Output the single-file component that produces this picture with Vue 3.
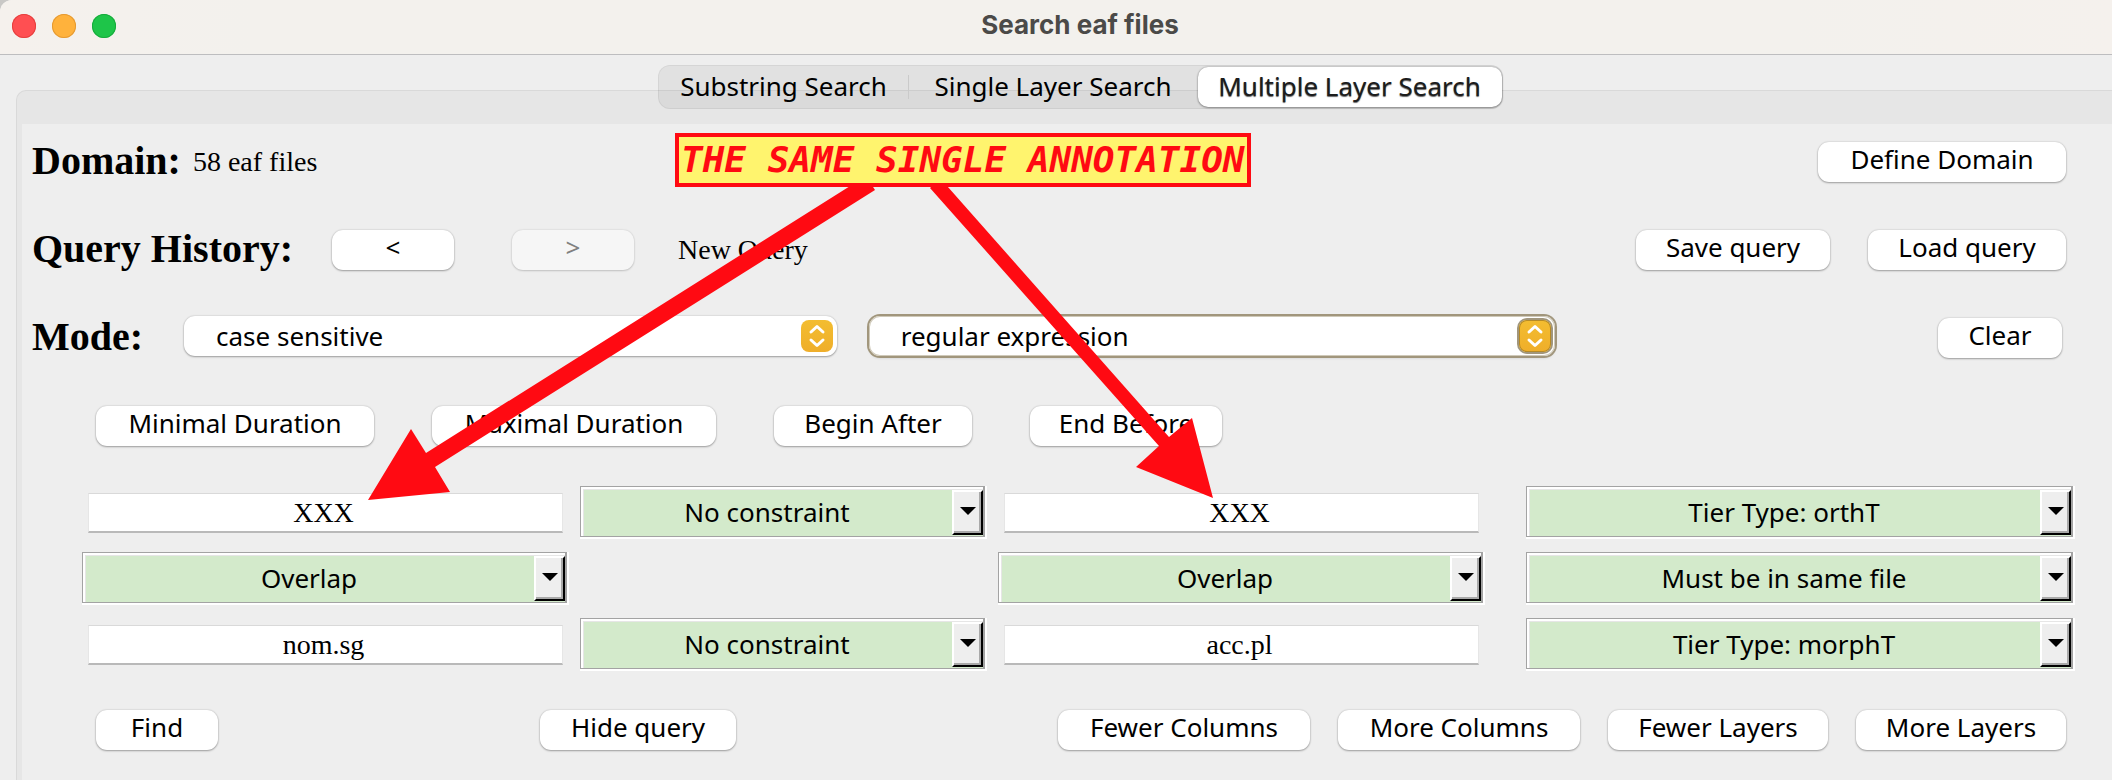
<script setup>
import { ref } from 'vue'

const tabs = ['Substring Search', 'Single Layer Search', 'Multiple Layer Search']
const activeTab = ref(2)

const filters = ['Minimal Duration', 'Maximal Duration', 'Begin After', 'End Before']

const cells = ref([
  { kind: 'input', label: 'Layer 1, column 1', value: 'XXX' },
  { kind: 'combo', label: 'Layer 1, column constraint', value: 'No constraint' },
  { kind: 'input', label: 'Layer 1, column 2', value: 'XXX' },
  { kind: 'combo', label: 'Layer 1, tier', value: 'Tier Type: orthT', wide: true },
  { kind: 'combo', label: 'Layer constraint, column 1', value: 'Overlap' },
  { kind: 'empty' },
  { kind: 'combo', label: 'Layer constraint, column 2', value: 'Overlap' },
  { kind: 'combo', label: 'Layer constraint, file', value: 'Must be in same file', wide: true },
  { kind: 'input', label: 'Layer 2, column 1', value: 'nom.sg' },
  { kind: 'combo', label: 'Layer 2, column constraint', value: 'No constraint' },
  { kind: 'input', label: 'Layer 2, column 2', value: 'acc.pl' },
  { kind: 'combo', label: 'Layer 2, tier', value: 'Tier Type: morphT', wide: true },
])
</script>

<template>
  <div class="window">
    <header class="titlebar">
      <div class="lights">
        <button class="light close" aria-label="Close"></button>
        <button class="light minimise" aria-label="Minimise"></button>
        <button class="light zoom" aria-label="Zoom"></button>
      </div>
      <h1 class="title">Search eaf files</h1>
    </header>

    <nav class="tab-row">
      <div class="tabs" role="tablist">
        <button
          v-for="(tab, i) in tabs"
          :key="tab"
          class="tab"
          :class="{ active: activeTab === i }"
          role="tab"
          :aria-selected="activeTab === i"
          @click="activeTab = i"
        >{{ tab }}</button>
      </div>
    </nav>

    <main class="panel">
      <div class="body">
        <section class="row">
          <h2 class="heading">Domain:</h2>
          <span class="note">58 eaf files</span>
          <button class="btn define push">Define Domain</button>
        </section>

        <section class="row">
          <h2 class="heading history">Query History:</h2>
          <button class="btn step" aria-label="Previous query">&lt;</button>
          <button class="btn step next" aria-label="Next query" disabled>&gt;</button>
          <span class="note query">New Query</span>
          <button class="btn save push">Save query</button>
          <button class="btn load">Load query</button>
        </section>

        <section class="row">
          <label class="heading mode" for="case-mode">Mode:</label>
          <div class="popup first">
            <select id="case-mode">
              <option>case sensitive</option>
              <option>case insensitive</option>
            </select>
            <svg class="chevrons" viewBox="0 0 32 32" aria-hidden="true">
              <path d="M10 12 L16 6.5 L22 12 M10 20 L16 25.5 L22 20" />
            </svg>
          </div>
          <div class="popup second focused">
            <select aria-label="Match mode">
              <option>regular expression</option>
              <option>exact match</option>
            </select>
            <svg class="chevrons" viewBox="0 0 32 32" aria-hidden="true">
              <path d="M10 12 L16 6.5 L22 12 M10 20 L16 25.5 L22 20" />
            </svg>
          </div>
          <div class="clear-slot">
            <button class="btn clear">Clear</button>
          </div>
        </section>

        <section class="filters">
          <button v-for="f in filters" :key="f" class="btn">{{ f }}</button>
        </section>

        <section class="query-grid">
          <template v-for="(cell, i) in cells" :key="i">
            <input
              v-if="cell.kind === 'input'"
              v-model="cell.value"
              class="field"
              type="text"
              :aria-label="cell.label"
            />
            <div v-else-if="cell.kind === 'combo'" class="combo" :class="{ wide: cell.wide }">
              <select :aria-label="cell.label">
                <option>{{ cell.value }}</option>
              </select>
              <span class="drop" aria-hidden="true">
                <svg viewBox="0 0 16 8"><path d="M0 0 H16 L8 8 Z" /></svg>
              </span>
            </div>
            <span v-else></span>
          </template>
        </section>

        <section class="actions">
          <button class="btn">Find</button>
          <button class="btn hide">Hide query</button>
          <span></span>
          <button class="btn">Fewer Columns</button>
          <button class="btn">More Columns</button>
          <button class="btn">Fewer Layers</button>
          <button class="btn">More Layers</button>
        </section>
      </div>
    </main>

    <svg class="arrows" width="1300" height="520" viewBox="0 0 1300 520" aria-hidden="true">
      <polygon points="866,176 426,453 411,429 368,500 450,492 435,467 875,190" />
      <polygon points="940,178 1169,437 1192,418 1213,498 1136,467 1159,446 930,188" />
    </svg>
    <div class="callout">THE SAME SINGLE ANNOTATION</div>
  </div>
</template>

<style>
body {
  margin: 0;
  background: #c9c8c6;
}
</style>

<style scoped>
.window {
  --ui: "Noto Sans", "Open Sans", sans-serif;
  --serif: "Liberation Serif", "Times New Roman", serif;
  --offscreen: 48px;
  position: relative;
  display: flex;
  flex-direction: column;
  min-height: 100vh;
  overflow: hidden;
  border-top-left-radius: 12px;
  background: #eeeeee;
  color: #000;
  font-family: var(--ui);
  font-size: 26px;
}

button,
select,
input {
  box-sizing: border-box;
  margin: 0;
  border: 0;
  font: inherit;
  color: inherit;
}

.titlebar {
  display: grid;
  align-items: center;
  height: 54px;
  border-bottom: 1px solid #bdbdbf;
  background: linear-gradient(90deg, #f5f1ed, #f3f1ed 12%, #f3f1ed 85%, #f5f1ed);
}

.lights,
.title {
  grid-area: 1 / 1;
}

.lights {
  display: flex;
  gap: 16px;
  padding: 0 0 2px 12px;
}

.light {
  width: 24px;
  height: 24px;
  padding: 0;
  border-radius: 50%;
}

.close {
  background: #ff4f52;
  box-shadow: inset 0 0 0 1px #e5403f;
}

.minimise {
  background: #ffb23c;
  box-shadow: inset 0 0 0 1px #e59a33;
}

.zoom {
  background: #1ec549;
  box-shadow: inset 0 0 0 1px #17ab3c;
}

.title {
  margin: 0;
  padding: 0 0 4px var(--offscreen);
  text-align: center;
  font: 700 26px/30px Inter, "Liberation Sans", sans-serif;
  color: #4b4a48;
}

.tab-row {
  position: relative;
  z-index: 1;
  display: flex;
  justify-content: center;
  padding: 10px 0 0 var(--offscreen);
}

.tabs {
  display: grid;
  grid-template-columns: 250px 289px 304px;
  box-sizing: border-box;
  height: 44px;
  padding: 1px;
  border-radius: 12px;
  background: rgba(0, 0, 0, 0.05);
  box-shadow: inset 0 0 0 1px rgba(0, 0, 0, 0.05);
}

.tab {
  padding: 0 0 3px;
  background: none;
  line-height: 36px;
  white-space: nowrap;
}

.tab:first-child {
  background: linear-gradient(#cacaca, #cacaca) right center / 1px 24px no-repeat;
}

.tab.active {
  margin: 1px 0;
  border-radius: 10px;
  background: #fff;
  box-shadow: 0 0 2px rgba(0, 0, 0, 0.35), 0 1px 2px rgba(0, 0, 0, 0.3);
  color: #1c1c1c;
  text-shadow: 0 1px 1px rgba(0, 0, 0, 0.6);
}

.panel {
  display: flex;
  flex: 1;
  margin: -19px 0 0 16px;
  padding: 33px 0 0 5px;
  border: 1px solid #d9d9d9;
  border-width: 1px 0 0 1px;
  border-top-left-radius: 10px;
  background: #e6e6e6;
}

.body {
  flex: 1;
  padding: 18px 37px 30px 10px;
  background: #eeeeee;
}

.row {
  display: flex;
  align-items: center;
  height: 40px;
  margin: 0 9px 48px 0;
}

.heading {
  flex: none;
  margin: 0;
  padding-bottom: 3px;
  font: 700 40px/44px var(--serif);
  white-space: nowrap;
}

.heading.history {
  width: 300px;
}

.heading.mode {
  width: 152px;
}

.note {
  margin-left: 12px;
  font: 28px/32px var(--serif);
  white-space: nowrap;
}

.note.query {
  margin-left: 44px;
}

.push {
  margin-left: auto;
}

.btn {
  height: 40px;
  padding: 0 0 5px;
  border-radius: 11px;
  background: #fff;
  box-shadow: 0 0 2px rgba(0, 0, 0, 0.2), 0 1px 2px rgba(0, 0, 0, 0.3);
  line-height: 35px;
  white-space: nowrap;
}

.btn:disabled {
  background: #f6f6f6;
  box-shadow: 0 0 2px rgba(0, 0, 0, 0.15), 0 1px 2px rgba(0, 0, 0, 0.15);
  color: #808080;
}

.define {
  width: 248px;
}

.step {
  width: 122px;
}

.step.next {
  margin-left: 58px;
}

.save {
  width: 194px;
}

.load {
  width: 198px;
  margin-left: 38px;
}

.popup {
  display: grid;
  grid-template-columns: 1fr 36px;
  align-items: center;
  height: 40px;
  margin-bottom: 4px;
  border-radius: 11px;
  background: #fff;
  box-shadow: 0 0 2px rgba(0, 0, 0, 0.2), 0 1px 2px rgba(0, 0, 0, 0.3);
}

.popup.first {
  flex: 652 1 0;
}

.popup.second {
  flex: 686 1 0;
  margin-left: 32px;
}

.popup.focused {
  box-shadow: 0 0 0 2px #a1967c, 0 2px 3px rgba(0, 0, 0, 0.15), inset 0 0 0 1px #cfc9b9;
}

.popup select {
  grid-area: 1 / 1 / 2 / 3;
  width: 100%;
  height: 40px;
  padding: 0 40px 0 32px;
  appearance: none;
  background: none;
  outline: none;
}

.chevrons {
  grid-area: 1 / 2;
  width: 32px;
  height: 32px;
  border-radius: 8px;
  background: linear-gradient(#f3bd30, #efae2a);
  pointer-events: none;
}

.focused .chevrons {
  box-shadow: 0 0 0 2px #a1967c, inset 0 0 0 1px #b58a26;
}

.chevrons path {
  fill: none;
  stroke: #fff;
  stroke-width: 3;
  stroke-linecap: round;
  stroke-linejoin: round;
}

.clear-slot {
  display: flex;
  flex: 506 1 0;
  justify-content: flex-end;
  padding-right: 4px;
}

.clear {
  width: 124px;
}

.filters {
  display: grid;
  grid-template-columns: 278px 284px 198px 192px;
  gap: 58px;
  margin: 0 0 40px 64px;
}

.query-grid {
  display: grid;
  grid-template-columns: 487fr 407fr 487fr 579fr;
  grid-auto-rows: 53px;
  gap: 13px 11px;
  margin: 0 0 39px 50px;
}

.field {
  width: auto;
  height: 40px;
  margin: 7px 6px 0;
  min-width: 0;
  padding: 0 4px 0 0;
  border: 1px solid #e6e6e6;
  border-top-color: #d9d9d9;
  border-bottom: 2px solid #b9b9b9;
  border-radius: 0;
  background: #fff;
  outline: none;
  text-align: center;
  font: 28px/32px var(--serif);
}

.combo {
  display: grid;
  grid-template-columns: 1fr 31px;
  box-sizing: border-box;
  height: 51px;
  min-width: 0;
  margin-right: 2px;
  padding: 2px 0 0 2px;
  border: 1px solid #a3a3a3;
  border-right-width: 2px;
  background: #fff;
  box-shadow: 2px 0 0 #fff, 0 2px 0 #fff, 2px 2px 0 #fff;
}

.combo.wide {
  margin-left: 30px;
}

.combo select {
  grid-area: 1 / 1 / 2 / 3;
  width: 100%;
  height: 47px;
  padding: 0 33px 2px 0;
  border: 1px solid #e6e6e6;
  border-width: 1px 0 0 1px;
  border-radius: 0;
  appearance: none;
  background: #d3eacb;
  outline: none;
  text-align: center;
  text-align-last: center;
}

.drop {
  grid-area: 1 / 2;
  display: flex;
  align-items: center;
  justify-content: center;
  margin: 1px 0;
  padding-bottom: 4px;
  border: 2px solid #fff;
  border-right-color: #000;
  border-bottom-color: #000;
  background: #eeeeee;
  box-shadow: inset -2px -2px 0 #a9a9a9;
  pointer-events: none;
}

.drop svg {
  width: 16px;
  height: 8px;
}

.actions {
  display: grid;
  grid-template-columns: 122px 196px 1fr 252px 242px 220px 210px;
  column-gap: 28px;
  margin: 0 9px 0 64px;
}

.hide {
  margin: 0 -294px 0 294px;
}

.arrows,
.callout {
  position: absolute;
  z-index: 2;
  pointer-events: none;
}

.arrows {
  top: 0;
  left: 0;
  fill: #ff0a12;
}

.callout {
  top: 133px;
  left: 675px;
  padding: 0 2px;
  border: 4px solid #ff0a12;
  background: #fff46e;
  color: #ff0a12;
  font: italic 700 36px/46px "DejaVu Sans Mono", monospace;
  white-space: nowrap;
}
</style>
